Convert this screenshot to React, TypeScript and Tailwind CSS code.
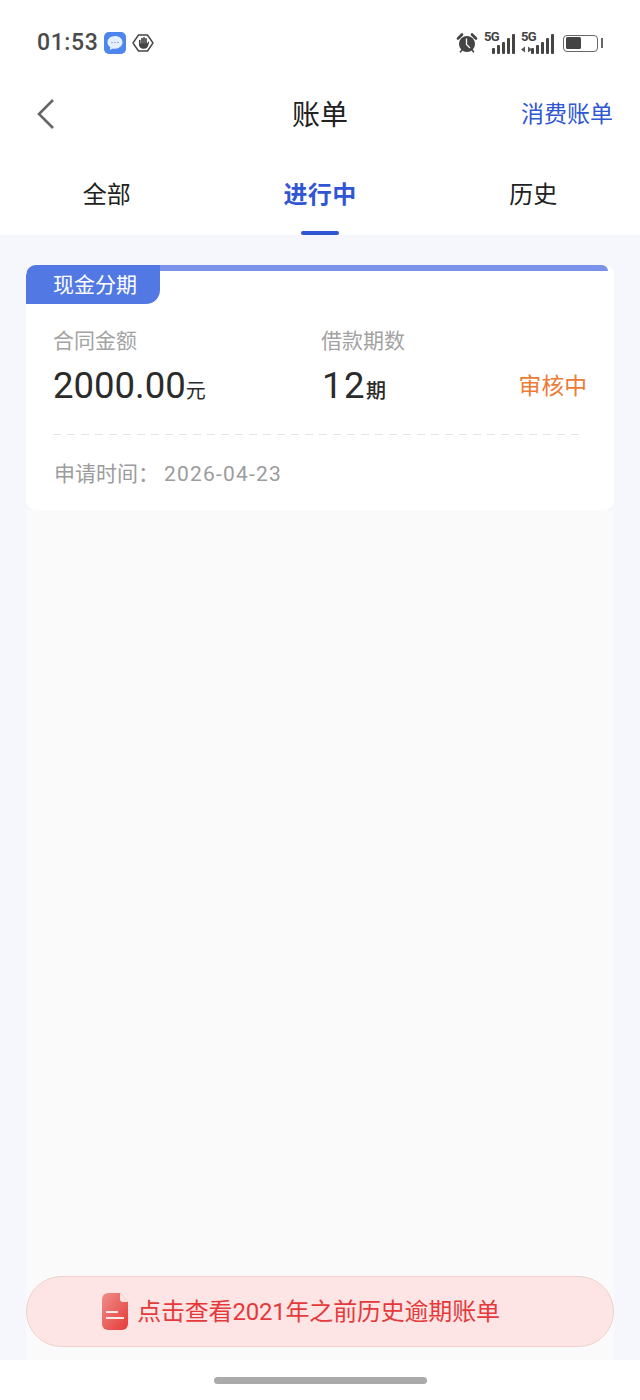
function ChatBadge() {
  return (
    <svg width="22" height="22" viewBox="0 0 22 22">
      <rect width="22" height="22" rx="5" fill="#4f86ee" />
      <path d="M11 4c-4.200 0-7.500 2.800-7.500 6.300 0 2.100 1.100 3.900 2.900 5l-.6 2.700 3.200-1.500c.6.100 1.300.2 2 .2 4.200 0 7.500-2.800 7.500-6.400S15.200 4 11 4z" fill="#e6f0fd" />
      <circle cx="8" cy="10.500" r=".7" fill="#6d8fc9" />
      <circle cx="11" cy="10.500" r=".7" fill="#6d8fc9" />
      <circle cx="14" cy="10.500" r=".7" fill="#6d8fc9" />
    </svg>
  );
}

function HandBadge() {
  return (
    <svg width="22" height="22" viewBox="0 0 22 22">
      <path d="M6.500 3h9L21 11l-5.500 8h-9L1 11z" fill="none" stroke="#444" strokeWidth="1.400" strokeLinejoin="round" />
      <path d="M7.800 8.500v4M10 6.500v6M12 5.800v6.500M14 6.800v5.500" stroke="#444" strokeWidth="1.700" strokeLinecap="round" />
      <path d="M7 11.500h8l1.500-2 .8.400-1.300 4c-.6 1.700-2 2.800-4 2.800-2.700 0-5-1.500-5-4z" fill="#444" />
    </svg>
  );
}

function Alarm() {
  return (
    <svg width="22" height="22" viewBox="0 0 22 22">
      <circle cx="11" cy="12" r="8" fill="#444" />
      <path d="M2 6.500 6 2.500M20 6.500l-4-4" stroke="#444" strokeWidth="2.600" strokeLinecap="round" />
      <path d="M4.500 19.800 6 18M17.500 19.800 16 18" stroke="#444" strokeWidth="1.600" strokeLinecap="round" />
      <path d="M10.500 6.500v6l3.500 3.500" stroke="#fff" strokeWidth="1.300" fill="none" />
    </svg>
  );
}

function Signal({ arrows }: { arrows?: boolean }) {
  const heights = [6, 9, 12, 16, 20];
  return (
    <div className={`relative h-[22px] ${arrows ? "w-[33px]" : "w-[31px]"}`}>
      <span className="absolute left-0 top-[-3px] text-[13px] leading-[16px] font-bold text-[#444] font-['Roboto',sans-serif] tracking-[-0.6px]">5G</span>
      {arrows && (
        <svg className="absolute left-0 bottom-[1px]" width="11" height="7" viewBox="0 0 11 7">
          <path d="M0 3.500 4 .5v6zM11 3.500 7 .5v6z" fill="#555" />
        </svg>
      )}
      <div className="absolute right-0 bottom-0 flex items-end gap-[2px]">
        {heights.map((h, i) => (
          <span key={i} className="w-[3px] bg-[#444] rounded-[1px]" style={{ height: h }} />
        ))}
      </div>
    </div>
  );
}

function Battery() {
  return (
    <div className="flex items-center gap-[3px]">
      <div className="w-[35px] h-[17px] border-[1.500px] border-[#666] rounded-[4px] p-[1.500px]">
        <div className="w-[15px] h-full bg-[#444] rounded-[1.500px]" />
      </div>
      <span className="w-[2px] h-[10px] bg-[#666]" />
    </div>
  );
}

function DocIcon() {
  return (
    <svg width="26" height="37" viewBox="0 0 26 37">
      <defs>
        <linearGradient id="doc" x1="0" y1="0" x2="1" y2="1">
          <stop offset="0" stopColor="#ee8f8b" />
          <stop offset="1" stopColor="#e63a36" />
        </linearGradient>
      </defs>
      <path d="M6 0h12l8 9v22a6 6 0 0 1-6 6H6a6 6 0 0 1-6-6V6a6 6 0 0 1 6-6z" fill="url(#doc)" />
      <path d="M18 0l8 9h-5a3 3 0 0 1-3-3z" fill="#fbe3e2" />
      <path d="M4 19h12M4 25h18" stroke="#fde8e6" strokeWidth="2" />
    </svg>
  );
}

export default function App() {
  return (
    <div className="font-['Roboto','Noto_Sans_CJK_SC',sans-serif] w-[640px] h-[1400px] flex flex-col bg-white overflow-hidden">
      {/* status bar */}
      <div className="h-[86px] pl-[37px] pr-[37px] pt-[32px] flex justify-between items-start">
        <div className="flex items-center h-[22px]">
          <span className="text-[23px] leading-[22px] font-medium text-[#4a4a4a] tracking-[0.6px] mr-[6px]">01:53</span>
          <ChatBadge />
          <span className="ml-[6px]"><HandBadge /></span>
        </div>
        <div className="flex items-center h-[22px]">
          <Alarm />
          <span className="ml-[6px]"><Signal /></span>
          <span className="ml-[6px]"><Signal arrows /></span>
          <span className="ml-[9px]"><Battery /></span>
        </div>
      </div>

      {/* title bar */}
      <div className="relative h-[56px] flex items-center justify-center">
        <svg className="absolute left-[36px] top-[11px]" width="20" height="34" viewBox="0 0 20 34">
          <path d="M17 3 3 17l14 14" fill="none" stroke="#666" strokeWidth="2.600" />
        </svg>
        <span className="text-[28px] leading-[40px] mt-[4px] text-[#222]">账单</span>
        <span className="absolute right-[27px] top-[12px] text-[23px] leading-[34px] text-[#3056d3]">消费账单</span>
      </div>

      {/* tabs */}
      <div className="h-[93px] grid grid-cols-3">
        <div className="flex justify-center pt-[33px] text-[24px] leading-[40px] text-[#222]">全部</div>
        <div className="relative flex justify-center pt-[33px] text-[24px] leading-[40px] font-bold tracking-[0.3px] text-[#3056d3]">
          进行中
          <span className="absolute left-1/2 -translate-x-1/2 bottom-0 w-[38px] h-[4px] rounded-full bg-[#3056d3]" />
        </div>
        <div className="flex justify-center pt-[33px] text-[24px] leading-[40px] text-[#222]">历史</div>
      </div>

      {/* content */}
      <div className="flex-1 bg-[#f5f7fc] px-[26px] pt-[30px] flex flex-col">
        <div className="relative h-[245px] bg-white rounded-[10px] overflow-hidden">
          <div className="absolute left-0 top-0 right-[6px] h-[6px] bg-[#7b92ea] rounded-tr-[6px]" />
          <div className="relative w-[134px] h-[39px] bg-[#5279e3] rounded-tl-[10px] rounded-br-[14px] text-white text-[21px] leading-[40px] pl-[27px]">
            现金分期
          </div>
          <div className="flex pl-[27px] pt-[20px] relative">
            <div className="w-[268px]">
              <div className="text-[21px] leading-[34px] text-[#a3a3a3]">合同金额</div>
              <div className="mt-[6px] leading-[44px] text-[#2b2b2b]">
                <span className="text-[36.500px]">2000.00</span>
                <span className="text-[20px]">元</span>
              </div>
            </div>
            <div>
              <div className="text-[21px] leading-[34px] text-[#a3a3a3]">借款期数</div>
              <div className="mt-[6px] leading-[44px] text-[#2b2b2b]">
                <span className="text-[36.500px] tracking-[1.500px] ml-[1px]">12</span>
                <span className="text-[20px] font-medium">期</span>
              </div>
            </div>
            <div className="absolute right-[27px] top-[66px] text-[22.800px] leading-[34px] text-[#ed7b36]">审核中</div>
          </div>
          <div className="ml-[27px] mr-[34px] mt-[19px] h-[1px] bg-[repeating-linear-gradient(90deg,#e4e4e4_0,#e4e4e4_8px,transparent_8px,transparent_14px)]" />
          <div className="pl-[28px] mt-[22px] text-[21px] leading-[34px] text-[#9c9c9c]">
            申请时间：<span className="ml-[5px] tracking-[1.200px]">2026-04-23</span>
          </div>
        </div>
        <div className="flex-1 bg-[#fafafa] pt-[766px] h-0">
          <div className="h-[71px] rounded-full bg-[#fce5e4] border border-[#f1cfcf] flex items-center justify-center gap-[9px] pr-[38px]">
            <DocIcon />
            <span className="text-[24px] tracking-[-0.2px] text-[#e5393b]">点击查看2021年之前历史逾期账单</span>
          </div>
        </div>
      </div>

      {/* home indicator */}
      <div className="h-[40px] flex justify-center pt-[17px] bg-white">
        <span className="w-[213px] h-[7px] rounded-full bg-[#aaaaaa]" />
      </div>
    </div>
  );
}
